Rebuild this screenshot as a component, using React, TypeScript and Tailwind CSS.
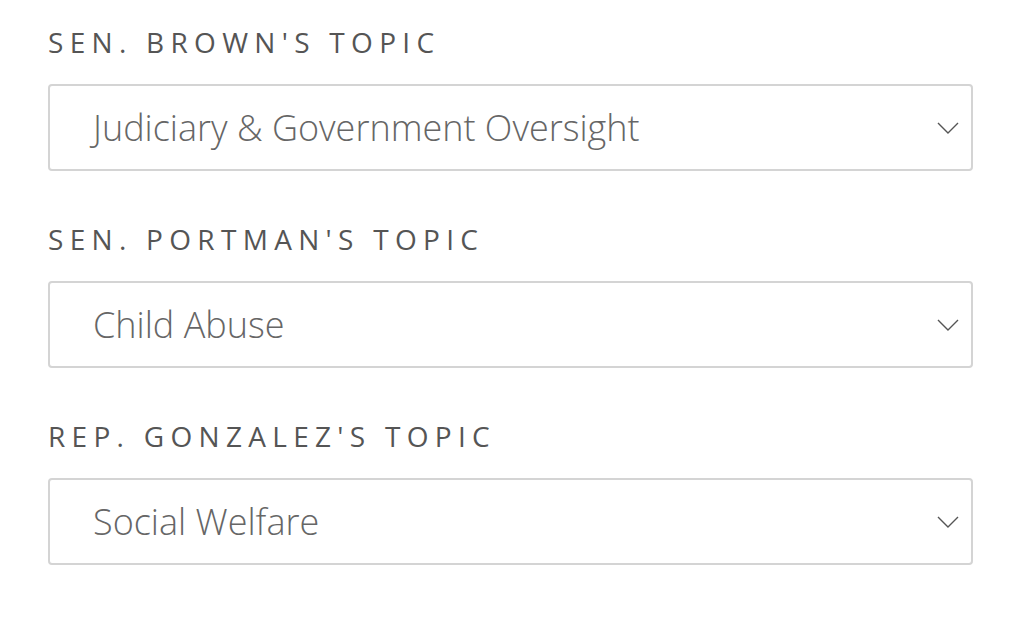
const fields = [
  { label: "SEN. BROWN'S TOPIC", value: 'Judiciary & Government Oversight' },
  { label: "SEN. PORTMAN'S TOPIC", value: 'Child Abuse' },
  { label: "REP. GONZALEZ'S TOPIC", value: 'Social Welfare' },
];

function Chevron() {
  return (
    <svg width="22" height="12" viewBox="0 0 22 12" fill="none" className="shrink-0">
      <path d="M1 1 L11 11 L21 1" stroke="#555" strokeWidth="1.4" />
    </svg>
  );
}

export default function App() {
  return (
    <div className="min-h-screen bg-white px-[48px] pt-[22px] font-['Open_Sans',sans-serif]">
      {fields.map((f) => (
        <div key={f.label} className="mb-[48px]">
          <div className="text-[28px] leading-[40px] tracking-[0.225em] text-[#555]">{f.label}</div>
          <div className="mt-[22px] flex h-[87px] w-[925px] items-center justify-between rounded-[4px] border-2 border-[#d4d4d4] pl-[43px] pr-[12px]">
            <span className="text-[36px] font-light text-[#666]">{f.value}</span>
            <Chevron />
          </div>
        </div>
      ))}
    </div>
  );
}
